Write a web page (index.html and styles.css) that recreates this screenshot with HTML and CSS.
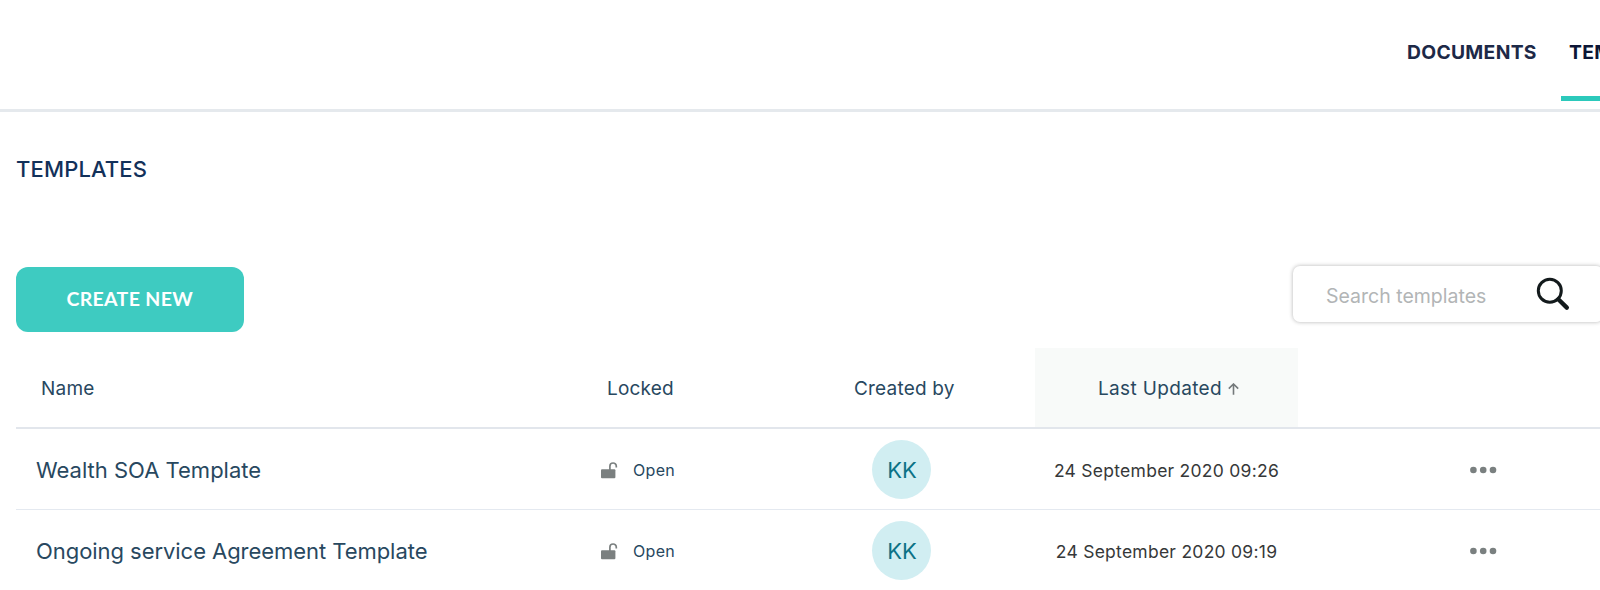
FILE: index.html
```html
<!DOCTYPE html>
<html lang="en">
<head>
<meta charset="utf-8">
<title>Templates</title>
<link rel="stylesheet" href="styles.css">
</head>
<body>
<header class="topbar">
  <nav class="nav">
    <a class="tab"><span class="tab-label">DOCUMENTS</span></a>
    <a class="tab active"><span class="tab-label">TEMPLATES</span></a>
  </nav>
</header>
<main class="page">
  <h1 class="title">TEMPLATES</h1>
  <div class="toolbar">
    <button class="create">CREATE NEW</button>
    <div class="search">
      <span class="placeholder">Search templates</span>
      <svg class="search-icon" width="34" height="34" viewBox="0 0 34 34" fill="none" stroke="#131a1c">
        <circle cx="13.8" cy="13.8" r="11.5" stroke-width="3"/>
        <path d="M22.3 22.3L30.8 30.6" stroke-width="4.4" stroke-linecap="round"/>
      </svg>
    </div>
  </div>
  <div class="table">
    <div class="row head">
      <div class="h-name"><span>Name</span></div>
      <div class="h-locked"><span>Locked</span></div>
      <div class="h-created"><span>Created by</span></div>
      <div class="h-updated"><span>Last Updated</span>
        <svg class="arrow" width="11" height="12" viewBox="0 0 11 12" fill="none" stroke="#74797b" stroke-width="1.6"><path d="M5.5 11.8V1.2M.8 5.6L5.5 1L10.2 5.6"/></svg>
      </div>
      <div></div>
    </div>
    <div class="row">
      <div class="name"><span class="name-a">Wealth SOA Template</span></div>
      <div class="locked">
        <svg class="lock" width="17" height="17" viewBox="0 0 17 17"><rect y="7.2" width="14.4" height="9" rx="1" fill="#7b8080"/><path d="M8.9 8V4.2a3.2 3.2 0 0 1 6.4 0V5.6" fill="none" stroke="#7b8080" stroke-width="1.7"/></svg>
        <span class="open">Open</span>
      </div>
      <div class="created"><span class="avatar">KK</span></div>
      <div class="updated"><span>24 September 2020 09:26</span></div>
      <div class="more"><svg width="27" height="8" viewBox="0 0 27 8" fill="#7a8080"><circle cx="3.4" cy="4" r="3.3"/><circle cx="13.2" cy="4" r="3.3"/><circle cx="23" cy="4" r="3.3"/></svg></div>
    </div>
    <div class="row">
      <div class="name"><span class="name-b">Ongoing service Agreement Template</span></div>
      <div class="locked">
        <svg class="lock" width="17" height="17" viewBox="0 0 17 17"><rect y="7.2" width="14.4" height="9" rx="1" fill="#7b8080"/><path d="M8.9 8V4.2a3.2 3.2 0 0 1 6.4 0V5.6" fill="none" stroke="#7b8080" stroke-width="1.7"/></svg>
        <span class="open">Open</span>
      </div>
      <div class="created"><span class="avatar">KK</span></div>
      <div class="updated"><span>24 September 2020 09:19</span></div>
      <div class="more"><svg width="27" height="8" viewBox="0 0 27 8" fill="#7a8080"><circle cx="3.4" cy="4" r="3.3"/><circle cx="13.2" cy="4" r="3.3"/><circle cx="23" cy="4" r="3.3"/></svg></div>
    </div>
  </div>
</main>
</body>
</html>
```
FILE: styles.css
```css
* { box-sizing: border-box; }
body {
  margin: 0;
  height: 590px;
  overflow: hidden;
  background: #fff;
  color: #28485f;
  font-family: Inter, "Liberation Sans", sans-serif;
}
.topbar {
  height: 112px;
  border-bottom: 3px solid #e5e9ed;
  overflow: hidden;
}
.nav {
  display: flex;
  gap: 16px;
  padding-left: 1399px;
}
.tab {
  flex: none;
  height: 101px;
  padding: 2px 9px 0 8px;
  width: 146px;
  border-bottom: 5px solid transparent;
  line-height: 100px;
  font-size: 19.3px;
  letter-spacing: .3px;
  font-weight: 700;
  color: #1d2947;
  white-space: nowrap;
}
.tab.active { width: 160px; border-color: #2cc9bb; color: #0c1636; }
.page { padding-left: 16px; }
.title {
  margin: 42px 0 0;
  height: 30px;
  line-height: 30px;
  font-size: 22px;
  letter-spacing: .15px;
  font-weight: 500;
  color: #12315a;
}
.toolbar {
  display: flex;
  justify-content: space-between;
  align-items: flex-start;
  margin-top: 82px;
  height: 82px;
}
.create {
  width: 227.5px;
  height: 65px;
  margin-top: .5px;
  padding: 0 0 1px;
  border: 0;
  border-radius: 12px;
  background: #3ecbc1;
  color: #fff;
  font: 700 19.5px Lato, sans-serif;
  letter-spacing: .35px;
}
.search {
  display: flex;
  align-items: center;
  width: 310px;
  height: 56px;
  margin-right: -3px;
  padding-left: 33px;
  border-radius: 7px;
  background: #fff;
  box-shadow: 0 0 4px rgba(0, 0, 0, .3);
}
.placeholder { width: 210px; padding-top: 3px; font-size: 19.5px; color: #b2b5b6; white-space: nowrap; }
.row {
  display: grid;
  grid-template-columns: 566px 230px 223px 263px 302px;
  height: 81px;
  border-bottom: 1px solid #e4e9f0;
  white-space: nowrap;
}
.row > div { display: flex; align-items: center; padding-top: 2px; }
.head { border-bottom: 2px solid #e2e6ec; font-size: 19px; letter-spacing: .2px; }
.h-name { padding-left: 25px; }
.h-locked { padding-left: 25px; }
.h-created { padding-left: 42px; }
.h-updated { padding-left: 63px; background: #f8faf9; letter-spacing: .35px; }
.arrow { margin-left: 6px; }
.name { padding-left: 20px; font-size: 22px; }
.name-b { letter-spacing: -.05px; }
.locked { padding-left: 19px; }
.lock { margin-right: 15px; }
.open { font-size: 16px; letter-spacing: .3px; }
.row > .created { padding: 1px 0 0 60px; }
.avatar {
  display: flex;
  align-items: center;
  justify-content: center;
  width: 59px;
  height: 59px;
  padding-left: 1px;
  border-radius: 50%;
  background: #d1eef2;
  color: #0c7286;
  font-size: 22px;
}
.updated { justify-content: center; font-size: 17.5px; letter-spacing: .26px; color: #363839; }
.more { padding-left: 172px; }
```
